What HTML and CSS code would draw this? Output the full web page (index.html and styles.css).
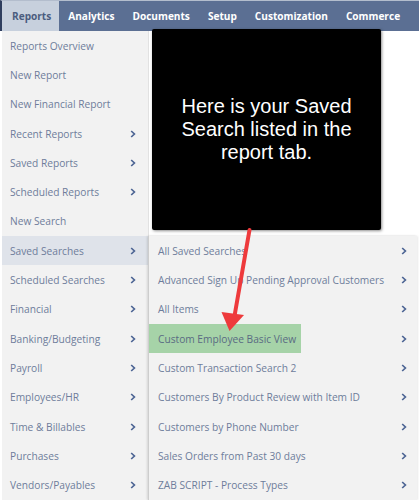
FILE: index.html
```html
<!DOCTYPE html>
<html>
<head>
<meta charset="utf-8">
<link rel="stylesheet" href="styles.css">
</head>
<body>
<nav class="topnav">
  <span class="tab active">Reports</span>
  <span class="tab">Analytics</span>
  <span class="tab">Documents</span>
  <span class="tab">Setup</span>
  <span class="tab">Customization</span>
  <span class="tab">Commerce</span>
</nav>
<div class="stage">
  <ul class="menu">
    <li class="item"><span class="label">Reports Overview</span></li>
    <li class="item"><span class="label">New Report</span></li>
    <li class="item"><span class="label">New Financial Report</span></li>
    <li class="item"><span class="label">Recent Reports</span><svg class="chev" viewBox="0 0 6 8"><polyline points="1.2,1 4.4,4 1.2,7"/></svg></li>
    <li class="item"><span class="label">Saved Reports</span><svg class="chev" viewBox="0 0 6 8"><polyline points="1.2,1 4.4,4 1.2,7"/></svg></li>
    <li class="item"><span class="label">Scheduled Reports</span><svg class="chev" viewBox="0 0 6 8"><polyline points="1.2,1 4.4,4 1.2,7"/></svg></li>
    <li class="item"><span class="label">New Search</span></li>
    <li class="item selected"><span class="label">Saved Searches</span><svg class="chev" viewBox="0 0 6 8"><polyline points="1.2,1 4.4,4 1.2,7"/></svg></li>
    <li class="item"><span class="label">Scheduled Searches</span><svg class="chev" viewBox="0 0 6 8"><polyline points="1.2,1 4.4,4 1.2,7"/></svg></li>
    <li class="item"><span class="label">Financial</span><svg class="chev" viewBox="0 0 6 8"><polyline points="1.2,1 4.4,4 1.2,7"/></svg></li>
    <li class="item"><span class="label">Banking/Budgeting</span><svg class="chev" viewBox="0 0 6 8"><polyline points="1.2,1 4.4,4 1.2,7"/></svg></li>
    <li class="item"><span class="label">Payroll</span><svg class="chev" viewBox="0 0 6 8"><polyline points="1.2,1 4.4,4 1.2,7"/></svg></li>
    <li class="item"><span class="label">Employees/HR</span><svg class="chev" viewBox="0 0 6 8"><polyline points="1.2,1 4.4,4 1.2,7"/></svg></li>
    <li class="item"><span class="label">Time &amp; Billables</span><svg class="chev" viewBox="0 0 6 8"><polyline points="1.2,1 4.4,4 1.2,7"/></svg></li>
    <li class="item"><span class="label">Purchases</span><svg class="chev" viewBox="0 0 6 8"><polyline points="1.2,1 4.4,4 1.2,7"/></svg></li>
    <li class="item"><span class="label">Vendors/Payables</span><svg class="chev" viewBox="0 0 6 8"><polyline points="1.2,1 4.4,4 1.2,7"/></svg></li>
  </ul>
  <ul class="submenu">
    <li class="item"><span class="label">All Saved Searches</span><svg class="chev" viewBox="0 0 6 8"><polyline points="1.2,1 4.4,4 1.2,7"/></svg></li>
    <li class="item"><span class="label">Advanced Sign Up Pending Approval Customers</span><svg class="chev" viewBox="0 0 6 8"><polyline points="1.2,1 4.4,4 1.2,7"/></svg></li>
    <li class="item"><span class="label">All Items</span><svg class="chev" viewBox="0 0 6 8"><polyline points="1.2,1 4.4,4 1.2,7"/></svg></li>
    <li class="item"><span class="label green">Custom Employee Basic View</span><svg class="chev" viewBox="0 0 6 8"><polyline points="1.2,1 4.4,4 1.2,7"/></svg></li>
    <li class="item"><span class="label">Custom Transaction Search 2</span><svg class="chev" viewBox="0 0 6 8"><polyline points="1.2,1 4.4,4 1.2,7"/></svg></li>
    <li class="item"><span class="label">Customers By Product Review with Item ID</span><svg class="chev" viewBox="0 0 6 8"><polyline points="1.2,1 4.4,4 1.2,7"/></svg></li>
    <li class="item"><span class="label">Customers by Phone Number</span><svg class="chev" viewBox="0 0 6 8"><polyline points="1.2,1 4.4,4 1.2,7"/></svg></li>
    <li class="item"><span class="label">Sales Orders from Past 30 days</span><svg class="chev" viewBox="0 0 6 8"><polyline points="1.2,1 4.4,4 1.2,7"/></svg></li>
    <li class="item"><span class="label">ZAB SCRIPT - Process Types</span><svg class="chev" viewBox="0 0 6 8"><polyline points="1.2,1 4.4,4 1.2,7"/></svg></li>
  </ul>
</div>
<div class="tooltip">Here is your Saved Search listed in the report tab.</div>
<svg class="arrow" viewBox="0 0 419 500" width="419" height="500">
  <line x1="249.5" y1="230" x2="234.5" y2="316" stroke="#ee3a3c" stroke-width="4" stroke-linecap="round"/>
  <polygon points="229.5,331 221.5,312 244,315" fill="#ee3a3c"/>
</svg>
</body>
</html>
```

FILE: styles.css
```css
html, body {
  margin: 0;
  padding: 0;
}
body {
  position: relative;
  width: 419px;
  height: 500px;
  overflow: hidden;
  background: #ffffff;
  font-family: "Open Sans", "Liberation Sans", sans-serif;
}
.topnav {
  display: flex;
  align-items: stretch;
  height: 30px;
  border-top: 1px solid #b3bdcd;
  border-left: 2px solid #2f3e5e;
  background: #5b6f93;
}
.tab {
  display: flex;
  align-items: center;
  padding: 0 9px;
  font-size: 10.1px;
  font-weight: 700;
  color: #ffffff;
  white-space: nowrap;
}
.tab.active {
  background: #c7d0dd;
  color: #4b5d7f;
  padding: 0 8px 0 10px;
}
.stage {
  position: relative;
}
ul {
  list-style: none;
  margin: 0;
  padding: 0;
}
.menu {
  margin-left: 2px;
  width: 146px;
  background: #f2f2f2;
  border-right: 1px solid #e2e2e2;
}
.item {
  display: flex;
  align-items: stretch;
  justify-content: space-between;
  height: 29.3px;
  font-size: 10.2px;
  color: #6e7d9b;
  white-space: nowrap;
}
.label {
  display: flex;
  align-items: center;
  padding-left: 8px;
}
.menu .item {
  padding-right: 12px;
}
.menu .selected {
  background: #dfe3ea;
}
.chev {
  width: 6px;
  height: 8px;
  align-self: center;
  fill: none;
  stroke: #4d6594;
  stroke-width: 1.7;
}
.submenu {
  position: absolute;
  left: 148px;
  top: 205.1px;
  width: 268px;
  background: #f2f2f2;
  border-left: 1px solid #cdcdcd;
  box-shadow: -1px 0 2px rgba(0, 0, 0, 0.12), 1px 0 2px rgba(0, 0, 0, 0.08);
}
.submenu .item {
  padding-right: 10px;
}
.submenu .label {
  padding-left: 9px;
}
.submenu .label.green {
  width: 143px;
  background: #a6d3a8;
  color: #5a6b83;
}
.tooltip {
  position: absolute;
  left: 152px;
  top: 29px;
  width: 229px;
  height: 201px;
  box-sizing: border-box;
  padding: 0 20px;
  display: flex;
  align-items: center;
  justify-content: center;
  text-align: center;
  background: #000000;
  border-radius: 2px;
  box-shadow: 1px 1px 3px rgba(0, 0, 0, 0.45);
  color: #ffffff;
  font-family: "Liberation Sans", Arial, sans-serif;
  font-size: 20px;
  line-height: 23.3px;
}
.arrow {
  position: absolute;
  left: 0;
  top: 0;
  pointer-events: none;
}
```
